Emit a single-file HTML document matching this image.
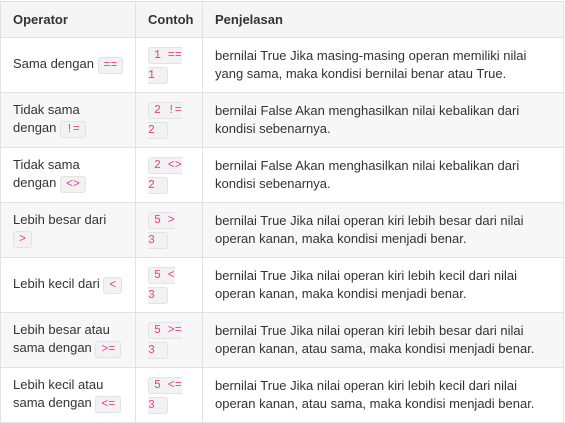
<!DOCTYPE html>
<html><head><style>
body{margin:0;background:#fff;font-family:"Liberation Sans",Arial,sans-serif;font-size:13px;color:#333;}
table{position:absolute;left:0;top:1px;border-collapse:collapse;width:564px;table-layout:fixed;}
td,th{border:1px solid #e2e2e2;padding:0 12px;vertical-align:middle;line-height:18px;text-align:left;}
td:first-child{padding-right:4px;}
td:last-child,th:last-child{padding-right:22px;}
th{height:35px;background:#f5f5f5;font-weight:bold;color:#333;}
td{height:54px;}
tr:nth-child(odd) td{background:#f7f7f7;}
code{font-family:"Liberation Mono",monospace;font-size:11.5px;color:#e83e8c;background:#f2f2f2;border:1px solid #e3e3e3;border-radius:3px;padding:1px 5px;}
code.a{border-right:none;border-radius:3px 0 0 3px;padding-right:0}
code.b{border-left:none;border-radius:0 3px 3px 0;padding-left:0}
.nw{white-space:nowrap}
</style></head><body>
<table>
<colgroup><col style="width:135px"><col style="width:67px"><col></colgroup>
<tr><th>Operator</th><th>Contoh</th><th>Penjelasan</th></tr>
<tr><td class="nw">Sama dengan <code>==</code></td><td><code class="a">1 ==</code><br><code class="b">1&nbsp;</code></td><td>bernilai True Jika masing-masing operan memiliki nilai yang sama, maka kondisi bernilai benar atau True.</td></tr>
<tr><td>Tidak sama<br>dengan <code>!=</code></td><td><code class="a">2 !=</code><br><code class="b">2&nbsp;</code></td><td>bernilai False Akan menghasilkan nilai kebalikan dari kondisi sebenarnya.</td></tr>
<tr><td>Tidak sama<br>dengan <code>&lt;&gt;</code></td><td><code class="a">2 &lt;&gt;</code><br><code class="b">2&nbsp;</code></td><td>bernilai False Akan menghasilkan nilai kebalikan dari kondisi sebenarnya.</td></tr>
<tr><td>Lebih besar dari<br><code>&gt;</code></td><td><code class="a">5 &gt;</code><br><code class="b">3&nbsp;</code></td><td>bernilai True Jika nilai operan kiri lebih besar dari nilai operan kanan, maka kondisi menjadi benar.</td></tr>
<tr><td class="nw">Lebih kecil dari <code>&lt;</code></td><td><code class="a">5 &lt;</code><br><code class="b">3&nbsp;</code></td><td>bernilai True Jika nilai operan kiri lebih kecil dari nilai operan kanan, maka kondisi menjadi benar.</td></tr>
<tr><td>Lebih besar atau<br>sama dengan <code>&gt;=</code></td><td><code class="a">5 &gt;=</code><br><code class="b">3&nbsp;</code></td><td>bernilai True Jika nilai operan kiri lebih besar dari nilai operan kanan, atau sama, maka kondisi menjadi benar.</td></tr>
<tr><td>Lebih kecil atau<br>sama dengan <code>&lt;=</code></td><td><code class="a">5 &lt;=</code><br><code class="b">3&nbsp;</code></td><td>bernilai True Jika nilai operan kiri lebih kecil dari nilai operan kanan, atau sama, maka kondisi menjadi benar.</td></tr>
</table>
</body></html>
